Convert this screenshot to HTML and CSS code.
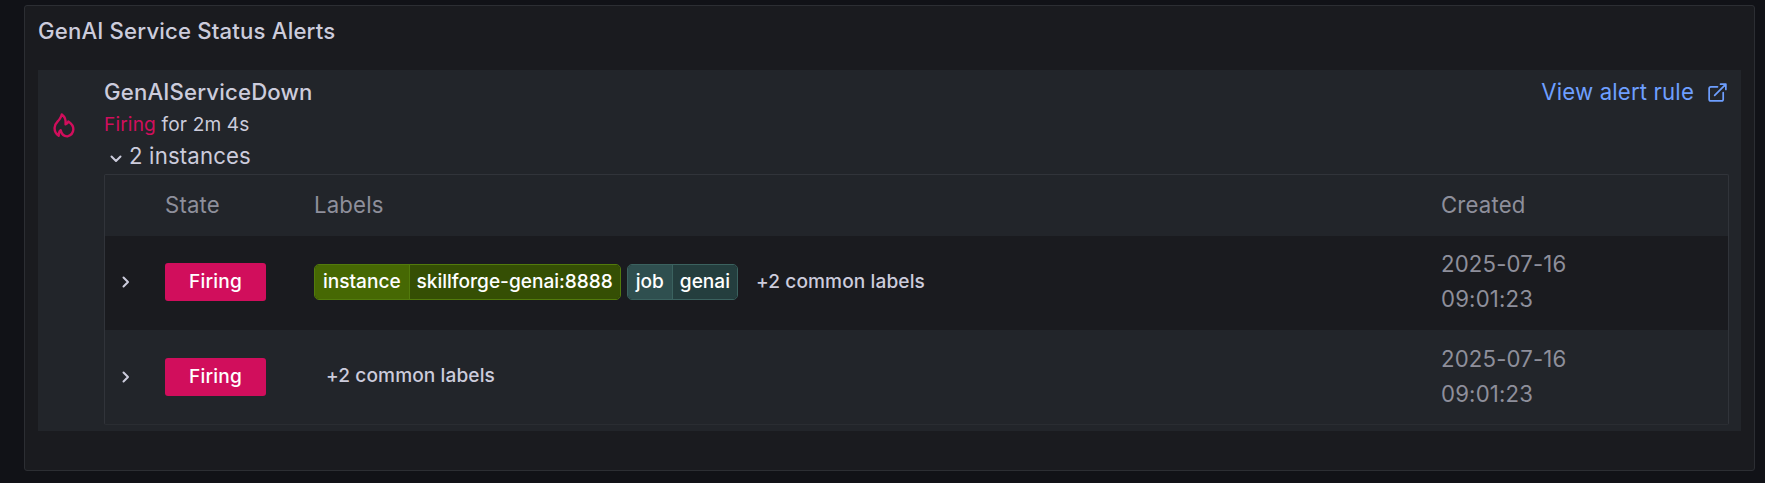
FILE: index.html
```html
<!DOCTYPE html>
<html lang="en">
<head>
<meta charset="utf-8">
<title>GenAI Service Status Alerts</title>
<link rel="stylesheet" href="styles.css">
</head>
<body>
<section class="panel">
  <h2 class="panel-title">GenAI Service Status Alerts</h2>
  <article class="alert">
    <div class="alert-state">
      <svg class="flame" viewBox="0 0 24 28" fill="none" stroke="currentColor" stroke-width="2.6" stroke-linejoin="round" stroke-linecap="round"><path d="M6.3 25.2C2.8 22.8 1.7 20 1.7 16.6C1.7 11.5 5 10.2 7.2 7.1C8.7 5 9.3 3.6 9.6 1.9C12.9 4.3 14.3 7.7 13.7 12.7C14.9 12.4 16.3 11.2 16.7 9.7C20.5 12.2 22.3 15.3 22.2 18.2C22 22 19.5 24.7 15.8 25.8C12.2 26 9.4 23.6 8.4 19.2C6.8 20.6 6 22.8 6.3 25.2Z"/></svg>
    </div>
    <div class="alert-body">
      <header class="alert-head">
        <div class="name">GenAIServiceDown</div>
        <a class="rule-link">View alert rule
          <svg class="external" viewBox="0 0 20 20" fill="none" stroke="currentColor" stroke-width="1.8" stroke-linecap="round" stroke-linejoin="round"><path d="M10 4H3Q1.2 4 1.2 5.8V17Q1.2 18.8 3 18.8H14.2Q16 18.8 16 17V10M7 13L18.6 1.4M13.2 1.2H18.8V6.8"/></svg>
        </a>
      </header>
      <div class="duration"><span class="firing">Firing</span> for 2m 4s</div>
      <div class="instances"><svg class="chevron" viewBox="0 0 12 8"><path d="M1.5 1.5L6 6L10.5 1.5"/></svg>2 instances</div>
      <div class="table">
        <div class="row head"><span></span><span>State</span><span>Labels</span><span>Created</span></div>
        <div class="row data dark">
          <svg class="expand" viewBox="0 0 8 12"><path d="M1.5 1.5L6 6L1.5 10.5"/></svg>
          <span class="badge">Firing</span>
          <div class="labels">
            <span class="tag green"><span class="key">instance</span><span class="value">skillforge-genai:8888</span></span>
            <span class="tag teal"><span class="key">job</span><span class="value">genai</span></span>
            <span class="common">+2 common labels</span>
          </div>
          <time>2025-07-16<br>09:01:23</time>
        </div>
        <div class="row data">
          <svg class="expand" viewBox="0 0 8 12"><path d="M1.5 1.5L6 6L1.5 10.5"/></svg>
          <span class="badge">Firing</span>
          <div class="labels"><span class="common">+2 common labels</span></div>
          <time>2025-07-16<br>09:01:23</time>
        </div>
      </div>
    </div>
  </article>
</section>
</body>
</html>
```
FILE: styles.css
```css
* { box-sizing: border-box; }
body {
  margin: 0;
  height: 483px;
  padding: 5px 10px 12px 24px;
  background: #111217;
  color: #ccccdc;
  font: 400 22.2px/35px Inter, "Liberation Sans", sans-serif;
  letter-spacing: 0.16px;
  overflow: hidden;
}
.panel {
  height: 466px;
  padding: 0 13px;
  background: #1a1b1f;
  border: 1px solid #2c2e33;
  border-radius: 3px;
}
.panel-title {
  margin: 0;
  height: 64px;
  font-size: 22.2px;
  font-weight: 500;
  line-height: 50px;
}
.alert {
  display: flex;
  width: 1703px;
  height: 361px;
  padding: 4px 12px 0 0;
  background: #22252a;
}
.alert-state { width: 66px; padding: 38px 0 0 15px; color: #d10e5c; }
.flame { display: block; width: 22px; height: 27px; }
.alert-body { flex: 1; }
.alert-head { display: flex; justify-content: space-between; height: 35px; }
.name { font-weight: 500; }
.rule-link { display: flex; align-items: center; gap: 14px; padding-right: 2px; color: #6e9fff; }
.external { width: 19px; height: 19px; margin-top: 1px; }
.duration { height: 29px; font-size: 19.1px; line-height: 31px; }
.firing { color: #d10e5c; }
.instances { display: flex; align-items: center; height: 36px; padding: 0 0 1px 6px; }
.chevron, .expand { fill: none; stroke: currentColor; stroke-width: 2; stroke-linecap: round; stroke-linejoin: round; }
.chevron { width: 12px; height: 8px; margin: 6px 7px 0 0; }
.table { width: 1625px; height: 251px; border: 1px solid #31343a; border-bottom-color: #2a2d32; border-radius: 2px; }
.row {
  display: grid;
  grid-template-columns: 60px 149px 1127px 1fr;
  align-items: center;
  color: #8e8f9b;
}
.head { height: 61px; padding-bottom: 2px; }
.data { height: 94px; padding-bottom: 1px; }
.dark { padding-bottom: 2px; background: #1a1b1f; }
.row time { padding-bottom: 2px; }
.expand { width: 8px; height: 12px; margin-left: 17px; color: #ccccdc; }
.badge {
  width: 101px;
  height: 38px;
  border-radius: 3px;
  background: #d10e5c;
  color: #fff;
  font-size: 19.1px;
  font-weight: 500;
  line-height: 36px;
  text-align: center;
}
.labels { display: flex; align-items: center; gap: 6px; color: #ccccdc; font-size: 19.1px; font-weight: 500; letter-spacing: 0.1px; }
.tag { display: flex; height: 36px; border: 1px solid; border-radius: 5px; color: #fff; line-height: 33px; letter-spacing: -0.02px; overflow: hidden; }
.key { padding: 0 8px; border-right: 1px solid; }
.value { padding: 0 7px; }
.green, .green .key { border-color: #527b0c; }
.green .key { background: #466803; }
.green .value { background: #354f04; }
.teal, .teal .key { border-color: #3b625f; }
.teal .key { background: #2f4f4f; }
.teal .value { background: #243e3e; }
.common { margin-left: 12px; line-height: 33px; padding-bottom: 2px; }
```
